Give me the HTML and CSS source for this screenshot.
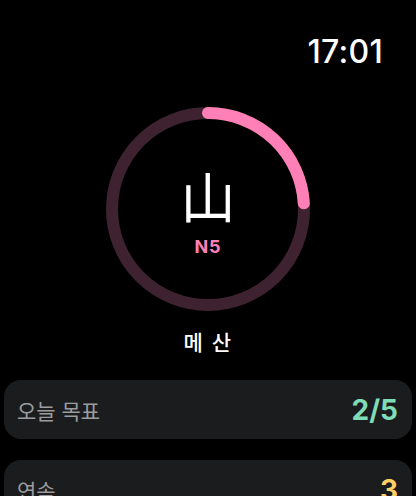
FILE: index.html
```html
<!DOCTYPE html>
<html lang="ko">
<head>
<meta charset="utf-8">
<link rel="stylesheet" href="styles.css">
</head>
<body>
<div class="screen">
  <header class="status">
    <span class="time">17:01</span>
  </header>
  <section class="hero">
    <div class="ring">
      <svg class="ring-svg" width="204" height="204" viewBox="0 0 204 204">
        <circle class="track" cx="102" cy="102" r="96"></circle>
        <circle class="progress" cx="102" cy="102" r="96" stroke-dasharray="144.8 603.2" transform="rotate(-90 102 102)"></circle>
      </svg>
      <div class="ring-label">
        <span class="kanji">山</span>
        <span class="level">N5</span>
      </div>
    </div>
    <div class="reading">메 산</div>
  </section>
  <div class="cards">
    <div class="card">
      <span class="card-label">오늘 목표</span>
      <span class="card-value goal">2/5</span>
    </div>
    <div class="card">
      <span class="card-label">연속</span>
      <span class="card-value streak">3</span>
    </div>
  </div>
</div>
</body>
</html>
```

FILE: styles.css
```css
html, body {
  margin: 0;
  padding: 0;
  background: #000;
}
body {
  width: 416px;
  height: 496px;
  overflow: hidden;
  font-family: "Inter", "Noto Sans CJK KR", sans-serif;
  color: #fff;
}
.screen {
  display: flex;
  flex-direction: column;
  padding: 0 4px;
}
.status {
  display: flex;
  justify-content: flex-end;
  padding: 33px 29px 0 0;
  height: 38px;
}
.time {
  font-family: "Inter", sans-serif;
  font-size: 32px;
  line-height: 38px;
  font-weight: 500;
  letter-spacing: 0.3px;
  color: #fff;
}
.hero {
  display: flex;
  flex-direction: column;
  align-items: center;
  padding-top: 36px;
}
.ring {
  display: grid;
  width: 204px;
  height: 204px;
}
.ring-svg {
  grid-area: 1 / 1;
  display: block;
}
.track {
  fill: none;
  stroke: #3f2230;
  stroke-width: 12;
}
.progress {
  fill: none;
  stroke: #ff80b6;
  stroke-width: 12;
  stroke-linecap: round;
}
.ring-label {
  grid-area: 1 / 1;
  display: flex;
  flex-direction: column;
  align-items: center;
  padding-top: 56px;
}
.kanji {
  font-family: "Noto Sans CJK JP", sans-serif;
  font-size: 55px;
  line-height: 62px;
  font-weight: 400;
  color: #fff;
}
.level {
  font-family: "Inter", sans-serif;
  font-size: 18px;
  line-height: 22px;
  font-weight: 700;
  letter-spacing: 1px;
  color: #ff80b6;
  margin-top: 11px;
}
.reading {
  font-family: "Noto Sans CJK KR", sans-serif;
  font-size: 21px;
  line-height: 28px;
  font-weight: 500;
  letter-spacing: 1.5px;
  margin-top: 16px;
  color: #fff;
}
.cards {
  display: flex;
  flex-direction: column;
  gap: 21px;
  margin-top: 25px;
}
.card {
  display: flex;
  align-items: center;
  justify-content: space-between;
  height: 59px;
  padding: 0 14px 0 13px;
  background: #1b1c1e;
  border-radius: 17px;
}
.card-label {
  font-family: "Noto Sans CJK KR", sans-serif;
  font-size: 21px;
  color: #9c9c9e;
}
.card-value {
  font-family: "Inter", sans-serif;
  font-size: 28px;
  font-weight: 700;
}
.goal { color: #7edcb6; }
.streak { color: #ffd064; }
```
